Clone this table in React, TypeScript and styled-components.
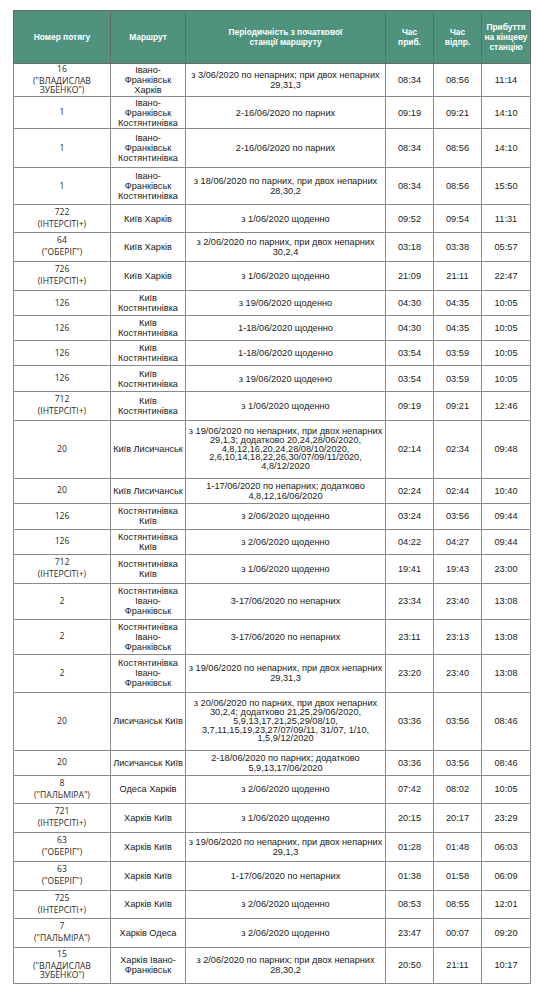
import styled, { createGlobalStyle } from "styled-components";

const GlobalStyle = createGlobalStyle`
  html, body {
    margin: 0;
    padding: 0;
    background: #ffffff;
  }
`;

const Page = styled.div`
  padding: 10px 0 0 13px;
  font-family: "Liberation Sans", Arial, sans-serif;
  color: #1a1a1a;
`;

const Table = styled.table`
  width: 517px;
  table-layout: fixed;
  border-collapse: collapse;
  border: 1.5px solid #4a4a4a;
`;

const HeadRow = styled.tr`
  height: 53px;
  background: #4f937f;
`;

const HeadCell = styled.th`
  padding: 0 1px;
  border: 1px solid #6a6a6a;
  color: #ffffff;
  font-size: 8.4px;
  font-weight: bold;
  line-height: 10px;
  text-align: center;
  vertical-align: middle;
`;

const Row = styled.tr<{ $h: number; $dark?: boolean }>`
  height: ${({ $h }) => $h}px;
  border-top: 1px solid ${({ $dark }) => ($dark ? "#202020" : "#8a8a8a")};
`;

const Cell = styled.td<{ $dense?: boolean }>`
  padding: 0 1px;
  border: 1px solid #8a8a8a;
  font-size: 9.2px;
  line-height: ${({ $dense }) => ($dense ? "8.7px" : "10px")};
  text-align: center;
  vertical-align: middle;
  white-space: pre-line;
`;

const TrainCell = styled(Cell)`
  font-family: "Open Sans", "Liberation Sans", sans-serif;
  font-size: 8.6px;
  color: #2a2a2a;
`;

const TrainNo = styled.div`
  line-height: 9px;
`;

const TrainName = styled.div`
  margin-top: 3px;
  line-height: 8.6px;
`;

type Train = {
  no: string;
  name?: string;
  route: string;
  period: string;
  arr: string;
  dep: string;
  end: string;
  h: number;
  dense?: boolean;
  dark?: boolean;
};

const IF_KOST = "Івано-\nФранківськ\nКостянтинівка";
const KYIV_KOST = "Київ\nКостянтинівка";
const KOST_KYIV = "Костянтинівка\nКиїв";
const KOST_IF = "Костянтинівка\nІвано-\nФранківськ";
const IC = "(ІНТЕРСІТІ+)";

const trains: Train[] = [
  { no: "16", name: '("ВЛАДИСЛАВ\nЗУБЕНКО")', route: "Івано-\nФранківськ\nХарків", period: "з 3/06/2020 по непарних; при двох непарних\n29,31,3", arr: "08:34", dep: "08:56", end: "11:14", h: 33 },
  { no: "1", route: IF_KOST, period: "2-16/06/2020 по парних", arr: "09:19", dep: "09:21", end: "14:10", h: 32 },
  { no: "1", route: IF_KOST, period: "2-16/06/2020 по парних", arr: "08:34", dep: "08:56", end: "14:10", h: 39 },
  { no: "1", route: IF_KOST, period: "з 18/06/2020 по парних, при двох непарних\n28,30,2", arr: "08:34", dep: "08:56", end: "15:50", h: 37 },
  { no: "722", name: IC, route: "Київ Харків", period: "з 1/06/2020 щоденно", arr: "09:52", dep: "09:54", end: "11:31", h: 28 },
  { no: "64", name: '("ОБЕРІГ")', route: "Київ Харків", period: "з 2/06/2020 по парних, при двох непарних\n30,2,4", arr: "03:18", dep: "03:38", end: "05:57", h: 28.5 },
  { no: "726", name: IC, route: "Київ Харків", period: "з 1/06/2020 щоденно", arr: "21:09", dep: "21:11", end: "22:47", h: 29.5 },
  { no: "126", route: KYIV_KOST, period: "з 19/06/2020 щоденно", arr: "04:30", dep: "04:35", end: "10:05", h: 25 },
  { no: "126", route: KYIV_KOST, period: "1-18/06/2020 щоденно", arr: "04:30", dep: "04:35", end: "10:05", h: 25 },
  { no: "126", route: KYIV_KOST, period: "1-18/06/2020 щоденно", arr: "03:54", dep: "03:59", end: "10:05", h: 25 },
  { no: "126", route: KYIV_KOST, period: "з 19/06/2020 щоденно", arr: "03:54", dep: "03:59", end: "10:05", h: 26 },
  { no: "712", name: IC, route: KYIV_KOST, period: "з 1/06/2020 щоденно", arr: "09:19", dep: "09:21", end: "12:46", h: 28.5 },
  {
    no: "20",
    route: "Київ Лисичанськ",
    period:
      "з 19/06/2020 по непарних, при двох непарних\n29,1,3; додатково 20,24,28/06/2020,\n4,8,12,16,20,24,28/08/10/2020,\n2,6,10,14,18,22,26,30/07/09/11/2020,\n4,8/12/2020",
    arr: "02:14",
    dep: "02:34",
    end: "09:48",
    h: 58,
    dense: true,
  },
  { no: "20", route: "Київ Лисичанськ", period: "1-17/06/2020 по непарних; додатково\n4,8,12,16/06/2020", arr: "02:24", dep: "02:44", end: "10:40", h: 25 },
  { no: "126", route: KOST_KYIV, period: "з 2/06/2020 щоденно", arr: "03:24", dep: "03:56", end: "09:44", h: 26 },
  { no: "126", route: KOST_KYIV, period: "з 2/06/2020 щоденно", arr: "04:22", dep: "04:27", end: "09:44", h: 25 },
  { no: "712", name: IC, route: KOST_KYIV, period: "з 1/06/2020 щоденно", arr: "19:41", dep: "19:43", end: "23:00", h: 29 },
  { no: "2", route: KOST_IF, period: "3-17/06/2020 по непарних", arr: "23:34", dep: "23:40", end: "13:08", h: 36 },
  { no: "2", route: KOST_IF, period: "3-17/06/2020 по непарних", arr: "23:11", dep: "23:13", end: "13:08", h: 35 },
  { no: "2", route: KOST_IF, period: "з 19/06/2020 по непарних, при двох непарних\n29,31,3", arr: "23:20", dep: "23:40", end: "13:08", h: 38.5, dark: true },
  {
    no: "20",
    route: "Лисичанськ Київ",
    period:
      "з 20/06/2020 по парних, при двох непарних\n30,2,4; додатково 21,25,29/06/2020,\n5,9,13,17,21,25,29/08/10,\n3,7,11,15,19,23,27/07/09/11, 31/07, 1/10,\n1,5,9/12/2020",
    arr: "03:36",
    dep: "03:56",
    end: "08:46",
    h: 57.5,
    dense: true,
  },
  { no: "20", route: "Лисичанськ Київ", period: "2-18/06/2020 по парних; додатково\n5,9,13,17/06/2020", arr: "03:36", dep: "03:56", end: "08:46", h: 25 },
  { no: "8", name: '("ПАЛЬМІРА")', route: "Одеса Харків", period: "з 2/06/2020 щоденно", arr: "07:42", dep: "08:02", end: "10:05", h: 28.5 },
  { no: "721", name: IC, route: "Харків Київ", period: "з 1/06/2020 щоденно", arr: "20:15", dep: "20:17", end: "23:29", h: 28.5 },
  { no: "63", name: '("ОБЕРІГ")', route: "Харків Київ", period: "з 19/06/2020 по непарних, при двох непарних\n29,1,3", arr: "01:28", dep: "01:48", end: "06:03", h: 29 },
  { no: "63", name: '("ОБЕРІГ")', route: "Харків Київ", period: "1-17/06/2020 по непарних", arr: "01:38", dep: "01:58", end: "06:09", h: 29 },
  { no: "725", name: IC, route: "Харків Київ", period: "з 2/06/2020 щоденно", arr: "08:53", dep: "08:55", end: "12:01", h: 28.5 },
  { no: "7", name: '("ПАЛЬМІРА")', route: "Харків Одеса", period: "з 2/06/2020 щоденно", arr: "23:47", dep: "00:07", end: "09:20", h: 28.5 },
  { no: "15", name: '("ВЛАДИСЛАВ\nЗУБЕНКО")', route: "Харків Івано-\nФранківськ", period: "з 2/06/2020 по парних; при двох непарних\n28,30,2", arr: "20:50", dep: "21:11", end: "10:17", h: 36 },
];

const App = () => {
  return (
    <>
      <GlobalStyle />
      <Page>
        <Table>
          <colgroup>
            <col style={{ width: 97 }} />
            <col style={{ width: 75 }} />
            <col style={{ width: 200 }} />
            <col style={{ width: 48 }} />
            <col style={{ width: 48 }} />
            <col style={{ width: 49 }} />
          </colgroup>
          <thead>
            <HeadRow>
              <HeadCell>Номер потягу</HeadCell>
              <HeadCell>Маршрут</HeadCell>
              <HeadCell>
                Періодичність з початкової
                <br />
                станції маршруту
              </HeadCell>
              <HeadCell>
                Час
                <br />
                приб.
              </HeadCell>
              <HeadCell>
                Час
                <br />
                відпр.
              </HeadCell>
              <HeadCell>
                Прибуття
                <br />
                на кінцеву
                <br />
                станцію
              </HeadCell>
            </HeadRow>
          </thead>
          <tbody>
            {trains.map((t, i) => (
              <Row key={i} $h={t.h} $dark={t.dark}>
                <TrainCell>
                  <TrainNo>{t.no}</TrainNo>
                  {t.name && <TrainName>{t.name}</TrainName>}
                </TrainCell>
                <Cell>{t.route}</Cell>
                <Cell $dense={t.dense}>{t.period}</Cell>
                <Cell>{t.arr}</Cell>
                <Cell>{t.dep}</Cell>
                <Cell>{t.end}</Cell>
              </Row>
            ))}
          </tbody>
        </Table>
      </Page>
    </>
  );
};

export default App;
